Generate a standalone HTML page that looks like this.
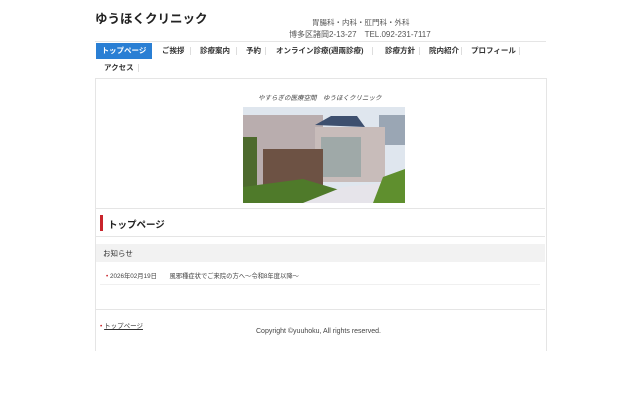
<!DOCTYPE html><html><head><meta charset="utf-8"><style>
body{margin:0;background:#fff;font-family:"Liberation Sans","Noto Sans CJK JP",sans-serif;color:#333;width:640px;height:400px;position:relative;overflow:hidden}
.a{position:absolute}
.nav span{position:absolute;font-size:7.5px;font-weight:bold;top:0;height:16px;line-height:16px;color:#333}
.sep{position:absolute;width:1px;height:8px;background:#ddd;top:4px}
</style></head><body>
<div class="a" style="left:95px;top:8px;font-size:12.5px;font-weight:bold;color:#222">ゆうほくクリニック</div>
<div class="a" style="left:312px;top:17px;font-size:7.5px;color:#555">胃腸科・内科・肛門科・外科</div>
<div class="a" style="left:289px;top:29px;font-size:8px;color:#555">博多区諸岡2-13-27　TEL.092-231-7117</div>
<div class="a" style="left:95px;top:41px;width:451px;height:1px;background:#e5e5e5"></div>
<div class="a nav" style="left:95px;top:43px;width:451px;height:16px">
<span style="left:1px;width:56px;background:#2a7fd4;color:#fff;text-align:center">トップページ</span>
<span style="left:67px">ご挨拶</span><div class="sep" style="left:95px"></div>
<span style="left:105px">診療案内</span><div class="sep" style="left:141px"></div>
<span style="left:151px">予約</span><div class="sep" style="left:170px"></div>
<span style="left:181px">オンライン診療(週兩診療)</span><div class="sep" style="left:277px"></div>
<span style="left:290px">診療方針</span><div class="sep" style="left:324px"></div>
<span style="left:334px">院内紹介</span><div class="sep" style="left:366px"></div>
<span style="left:376px">プロフィール</span><div class="sep" style="left:424px"></div>
</div>
<div class="a nav" style="left:95px;top:60px;width:451px;height:16px"><span style="left:9px">アクセス</span><div class="sep" style="left:43px"></div></div>
<div class="a" style="left:95px;top:78px;width:450px;height:272px;border-left:1px solid #e5e5e5;border-right:1px solid #e5e5e5;border-top:1px solid #e5e5e5"></div>
<div class="a" style="left:258px;top:92px;font-size:6.5px;font-style:italic;color:#444">やすらぎの医療空間　ゆうほくクリニック</div>
<svg class="a" style="left:243px;top:107px" width="162" height="96" viewBox="0 0 162 96">
<rect width="162" height="96" fill="#dfe6ee"/>
<rect x="136" y="8" width="26" height="30" fill="#9aa6b4"/>
<rect x="0" y="8" width="80" height="70" fill="#b9adae"/>
<polygon points="72,18 88,9 114,9 122,20" fill="#3d4f6e"/>
<rect x="72" y="20" width="70" height="55" fill="#c8bcba"/>
<rect x="78" y="30" width="40" height="40" fill="#9fa9a8"/>
<rect x="20" y="42" width="60" height="40" fill="#6d5244"/>
<rect x="0" y="30" width="14" height="60" fill="#4d6a2d"/>
<polygon points="0,96 0,80 60,72 100,84 90,96" fill="#4f7a2a"/>
<polygon points="60,96 100,80 140,76 130,96" fill="#e6e4ea"/>
<polygon points="130,96 140,70 162,62 162,96" fill="#5f8f2e"/>
</svg>
<div class="a" style="left:96px;top:208px;width:449px;height:1px;background:#e5e5e5"></div>
<div class="a" style="left:100px;top:215px;width:3px;height:16px;background:#c9242b"></div>
<div class="a" style="left:108px;top:217px;font-size:9.5px;font-weight:bold;color:#222">トップページ</div>
<div class="a" style="left:96px;top:236px;width:449px;height:1px;background:#e5e5e5"></div>
<div class="a" style="left:96px;top:244px;width:449px;height:18px;background:#f2f2f2"></div>
<div class="a" style="left:103px;top:248px;font-size:7.5px;color:#333">お知らせ</div>
<div class="a" style="left:106px;top:271px;font-size:6.3px;color:#444"><span style="color:#c9242b">•</span> 2026年02月19日　　風邪種症状でご来院の方へ〜令和8年度以降〜</div>
<div class="a" style="left:100px;top:284px;width:440px;height:1px;background:#f0f0f0"></div>
<div class="a" style="left:96px;top:309px;width:449px;height:1px;background:#e5e5e5"></div>
<div class="a" style="left:100px;top:320px;font-size:6.5px;color:#333"><span style="color:#c9242b">•</span> <u>トップページ</u></div>
<div class="a" style="left:256px;top:328px;font-size:7px;color:#444">Copyright ©yuuhoku, All rights reserved.</div>
</body></html>
